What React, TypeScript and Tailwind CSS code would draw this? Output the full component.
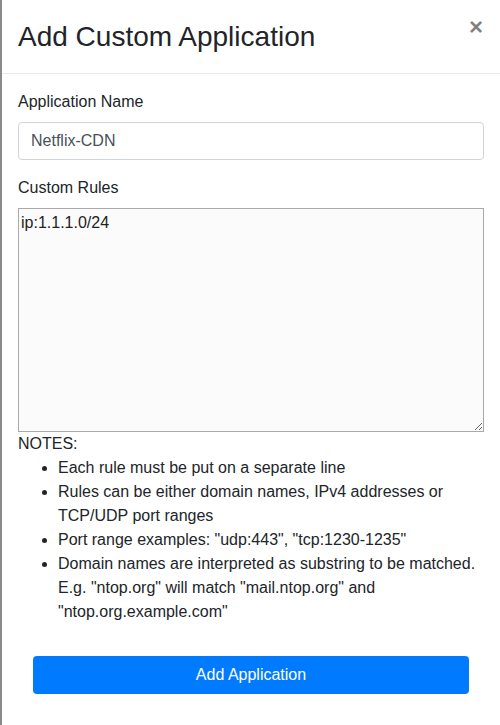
export default function App() {
  return (
    <div className="flex min-h-[725px] bg-white font-['Liberation_Sans',Arial,sans-serif] text-[16px] leading-6 text-[#212529]">
      {/* backdrop edge */}
      <div className="w-[2px] shrink-0 bg-[#8a8a8a]" />

      <div className="flex-1 min-w-0">
        {/* Header */}
        <div className="flex items-start justify-between px-4 pt-4 pb-[15px] border-b border-[#e9ecef]">
          <h4 className="text-[28px] leading-[42px] font-normal">Add Custom Application</h4>
          <button
            type="button"
            className="text-[24px] leading-none font-bold text-black/50 -mt-[1px] mr-[1px]"
            title="Close"
          >
            ×
          </button>
        </div>

        {/* Body */}
        <div className="p-4">
          <div className="mb-4">
            <label className="block mb-2">Application Name</label>
            <input
              type="text"
              defaultValue="Netflix-CDN"
              className="block w-full h-[38px] px-3 border border-[#ced4da] rounded text-[#495057] bg-white outline-none"
            />
          </div>

          <div>
            <label className="block mb-2">Custom Rules</label>
            <textarea
              defaultValue="ip:1.1.1.0/24"
              className="block w-full h-[224px] p-[2px] border border-[#a9a9a9] bg-[#fbfbfb] text-[#222] outline-none"
            />
          </div>

          <div>NOTES:</div>
          <ul className="list-disc pl-10">
            <li>Each rule must be put on a separate line</li>
            <li>Rules can be either domain names, IPv4 addresses or TCP/UDP port ranges</li>
            <li>Port range examples: "udp:443", "tcp:1230-1235"</li>
            <li>
              Domain names are interpreted as substring to be matched. E.g. "ntop.org" will match
              "mail.ntop.org" and "ntop.org.example.com"
            </li>
          </ul>

          <div className="mt-8 mx-[15px]">
            <button
              type="button"
              className="w-full h-[38px] rounded bg-[#007bff] text-white"
            >
              Add Application
            </button>
          </div>
        </div>
      </div>
    </div>
  )
}
